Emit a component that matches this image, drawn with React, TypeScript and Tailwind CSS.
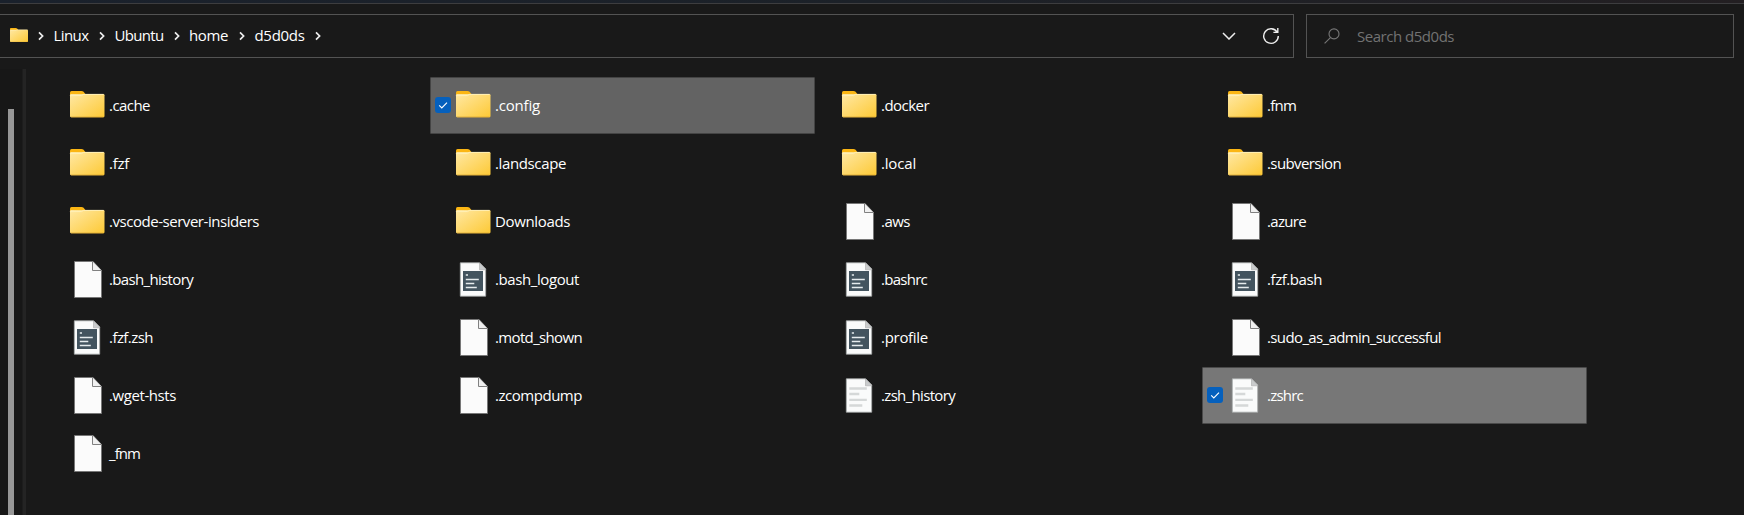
import React from "react";

type Kind = "folder" | "file" | "script" | "text";
type Item = { name: string; kind: Kind; w: number; selected?: "dim" | "bright" };

const items: Item[] = [
  { name: ".cache", kind: "folder", w: 41 },
  { name: ".config", kind: "folder", w: 45, selected: "dim" },
  { name: ".docker", kind: "folder", w: 48 },
  { name: ".fnm", kind: "folder", w: 29 },
  { name: ".fzf", kind: "folder", w: 20 },
  { name: ".landscape", kind: "folder", w: 71 },
  { name: ".local", kind: "folder", w: 35 },
  { name: ".subversion", kind: "folder", w: 74 },
  { name: ".vscode-server-insiders", kind: "folder", w: 150 },
  { name: "Downloads", kind: "folder", w: 75 },
  { name: ".aws", kind: "file", w: 29 },
  { name: ".azure", kind: "file", w: 39 },
  { name: ".bash_history", kind: "file", w: 84 },
  { name: ".bash_logout", kind: "script", w: 84 },
  { name: ".bashrc", kind: "script", w: 46 },
  { name: ".fzf.bash", kind: "script", w: 55 },
  { name: ".fzf.zsh", kind: "script", w: 44 },
  { name: ".motd_shown", kind: "file", w: 87 },
  { name: ".profile", kind: "script", w: 47 },
  { name: ".sudo_as_admin_successful", kind: "file", w: 174 },
  { name: ".wget-hsts", kind: "file", w: 67 },
  { name: ".zcompdump", kind: "file", w: 87 },
  { name: ".zsh_history", kind: "text", w: 74 },
  { name: ".zshrc", kind: "text", w: 36, selected: "bright" },
  { name: "_fnm", kind: "file", w: 31 },
];

function FolderShape() {
  return (
    <>
      <path d="M2 7.4Q2 5.9 3.5 5.9H13.4Q14.8 5.9 15.6 6.8L17.8 9.6V18H2Z" fill="#fbb614" />
      <rect x="2" y="9" width="34.5" height="23.3" rx="1.2" fill="url(#folderFace)" />
      <path d="M2.6 11.2V10.6H13.5L15.4 9.4H35.6" fill="none" stroke="#fff0b8" strokeWidth="1" />
      <path d="M3 32H35.6" stroke="#d9a52e" strokeWidth=".7" />
    </>
  );
}

function ItemIcon({ kind }: { kind: Kind }) {
  return (
    <svg className="size-10 shrink-0" viewBox="0 0 40 40">
      {kind === "folder" && <FolderShape />}
      {kind === "file" && (
        <>
          <path d="M6.5 2.5H25L33.5 11.5V38.5H6.5Z" fill="#fbfbfb" stroke="#777" />
          <path d="M24.5 2.5V11.5H33.5" fill="#f0f0f0" stroke="#808080" />
        </>
      )}
      {(kind === "script" || kind === "text") && (
        <>
          <path d="M6.3 3.8H25.5L31.7 10V37.2H6.3Z" fill="#fafbfb" stroke="#a5a8a8" strokeWidth=".8" />
          <path d="M25.5 3.8L31.7 10V10.8H25.5Z" fill="#c9cbcc" stroke="#aaa" strokeWidth=".6" />
        </>
      )}
      {kind === "script" && (
        <>
          <path d="M9 12H29V32H9Z" fill="#43545f" />
          <path d="M11.8 16h2.2M11.8 20.5h13M11.8 24.5h8.5M11.8 28.5h11" stroke="#e6ecee" strokeWidth="1.5" />
        </>
      )}
      {kind === "text" && (
        <path d="M9.3 13.5h17.5M9.3 19h10M9.3 24.8h17.5M9.3 30.5h13" stroke="#d5d8d8" strokeWidth="2.3" />
      )}
    </svg>
  );
}

function Label({ text, width }: { text: string; width: number }) {
  const ref = React.useRef<HTMLSpanElement>(null);
  const [spacing, setSpacing] = React.useState(0);
  React.useLayoutEffect(() => {
    if (ref.current) {
      const natural = ref.current.getBoundingClientRect().width - spacing * text.length;
      setSpacing((width - natural) / text.length);
    }
  }, [text, width]);
  return (
    <span ref={ref} className="whitespace-nowrap" style={{ letterSpacing: spacing }}>
      {text}
    </span>
  );
}

function Checkbox() {
  return (
    <span className="flex size-4 items-center justify-center rounded-[3px] bg-[#0560bd]">
      <svg className="size-4" viewBox="0 0 16 16" fill="none" stroke="#fff" strokeWidth="1.1">
        <path d="M4.2 8.3L6.8 10.9L12 5.6" />
      </svg>
    </span>
  );
}

function Tile({ item }: { item: Item }) {
  const tone =
    item.selected === "dim"
      ? "bg-[#636363] border-[#444]"
      : item.selected === "bright"
        ? "bg-[#777] border-[#4a4a4a]"
        : "border-transparent";
  return (
    <div className={`flex h-[57px] items-start rounded-[1px] border pl-1 pt-[7px] ${tone}`}>
      <div className="mt-3 w-[19px] shrink-0">{item.selected && <Checkbox />}</div>
      <ItemIcon kind={item.kind} />
      <div className="ml-px pt-2.5">
        <Label text={item.name} width={item.w} />
      </div>
    </div>
  );
}

function Crumb({ name, width, className }: { name: string; width: number; className: string }) {
  return (
    <div className={`flex shrink-0 items-center justify-between ${className}`}>
      <div className="pb-0.5">
        <Label text={name} width={width} />
      </div>
      <CrumbChevron />
    </div>
  );
}

function CrumbChevron() {
  return (
    <svg className="h-2.5 w-1.5 shrink-0" viewBox="0 0 6 10" fill="none" stroke="#eee" strokeWidth="1.7">
      <path d="M1 1.4L4.6 5L1 8.6" />
    </svg>
  );
}

export default function App() {
  return (
    <div className="flex h-[515px] w-[1744px] flex-col overflow-hidden bg-[#191919] font-['Open_Sans','Noto_Sans',sans-serif] text-[15px] leading-5 text-white">
      <svg className="absolute size-0">
        <defs>
          <linearGradient id="folderFace" x1="0" y1="0" x2="1" y2="1">
            <stop offset="0" stopColor="#ffe8a3" />
            <stop offset="1" stopColor="#fdc935" />
          </linearGradient>
        </defs>
      </svg>
      <div className="h-1 shrink-0 border-b border-[#3d3d3f] bg-gradient-to-r from-[#1a212c] via-[#1c2128] to-[#231f22]" />
      <div className="flex h-[65px] shrink-0 pt-2.5">
        <div className="flex h-11 w-[1294px] items-center border border-l-0 border-[#535353] pl-2.5">
          <svg className="mb-0.5 h-3.5 w-[18px] shrink-0" viewBox="2 5.9 34.5 26.4" preserveAspectRatio="none">
            <FolderShape />
          </svg>
          <div className="flex w-[15.5px] shrink-0 justify-end">
            <CrumbChevron />
          </div>
          <Crumb name="Linux" width={35} className="ml-[10px] w-[51.5px]" />
          <Crumb name="Ubuntu" width={49} className="ml-[9.5px] w-[65.5px]" />
          <Crumb name="home" width={39} className="ml-[9px] w-[56px]" />
          <Crumb name="d5d0ds" width={50} className="ml-[9.5px] w-[66px]" />
          <svg className="mr-px ml-auto h-2 w-3.5" viewBox="0 0 14 8" fill="none" stroke="#eee" strokeWidth="1.5">
            <path d="M1 1L7 7L13 1" />
          </svg>
          <svg className="mr-[13px] ml-[25px] size-[18px]" viewBox="0 0 18 18" fill="none" stroke="#eee" strokeWidth="1.4">
            <path d="M15.2 5.2A7.3 7.3 0 1 0 16.3 9M15.8 1V5.4H11.4" />
          </svg>
        </div>
        <div className="ml-3 flex h-11 w-[428px] items-center border border-[#535353] pl-[17px] text-[#727272]">
          <svg className="mb-px size-4 shrink-0" viewBox="0 0 16 16" fill="none" stroke="#777" strokeWidth="1.1">
            <circle cx="10" cy="5.9" r="5" />
            <path d="M6.4 9.6L.6 15.4" />
          </svg>
          <div className="ml-[17px]">
            <Label text="Search d5d0ds" width={97} />
          </div>
        </div>
      </div>
      <div className="flex min-h-0 flex-1">
        <div className="flex w-[26px] shrink-0 bg-[#171717]">
          <div className="mt-10 ml-2 w-1.5 bg-[#979797]" />
          <div className="ml-2 w-1 border-l border-[#1d1d1d] bg-[#242424]" />
        </div>
        <div className="ml-[18px] grid grid-cols-[repeat(4,385px)] content-start gap-px pt-2">
          {items.map((item) => (
            <Tile key={item.name} item={item} />
          ))}
        </div>
      </div>
    </div>
  );
}
